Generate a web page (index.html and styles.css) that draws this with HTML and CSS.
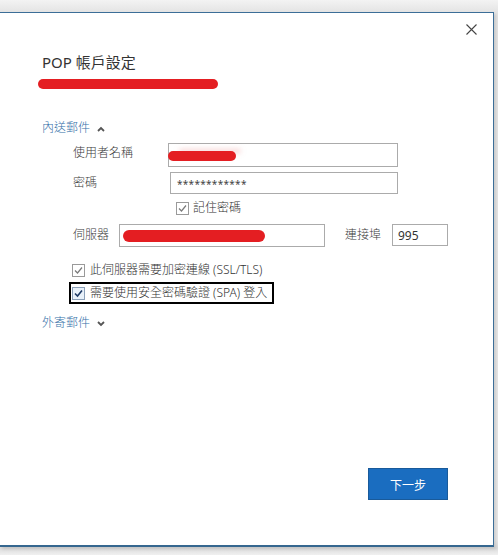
FILE: index.html
```html
<!DOCTYPE html>
<html lang="zh-Hant">
<head>
<meta charset="utf-8">
<title>POP 帳戶設定</title>
<link rel="stylesheet" href="styles.css">
</head>
<body>
<div class="window">
  <button class="close" aria-label="關閉">
    <svg width="11" height="11" viewBox="0 0 11 11"><path d="M0.5 0.5 L10.5 10.5 M10.5 0.5 L0.5 10.5" stroke="#444" stroke-width="1.1" fill="none"/></svg>
  </button>
  <h1 class="title">POP 帳戶設定</h1>
  <div class="redact redact-title"></div>

  <div class="group-head head-in">內送郵件
    <svg class="chev" width="8" height="6" viewBox="0 0 8 6"><path d="M1 5 L4 2 L7 5" stroke="#555" stroke-width="1.8" fill="none"/></svg>
  </div>

  <div class="fields">
    <div class="row row-user">
      <span class="lbl lbl-user">使用者名稱</span>
      <div class="input in-user"><span class="redact redact-user"></span></div>
    </div>
    <div class="row row-pwd">
      <span class="lbl lbl-pwd">密碼</span>
      <div class="input in-pwd"><span class="stars">************</span></div>
    </div>
    <div class="row row-remember">
      <span class="cb"><svg width="11" height="11" viewBox="0 0 11 11"><path d="M2 5.5 L4.5 8 L9 2.5" stroke="#7a7a7a" stroke-width="1.2" fill="none"/></svg></span>
      <span class="cb-text">記住密碼</span>
    </div>
    <div class="row row-server">
      <span class="lbl lbl-server">伺服器</span>
      <div class="input in-server"><span class="redact redact-server"></span></div>
      <span class="lbl lbl-port">連接埠</span>
      <div class="input in-port"><span class="val">995</span></div>
    </div>
    <div class="row row-ssl">
      <span class="cb"><svg width="11" height="11" viewBox="0 0 11 11"><path d="M2 5.5 L4.5 8 L9 2.5" stroke="#7a7a7a" stroke-width="1.2" fill="none"/></svg></span>
      <span class="cb-text">此伺服器需要加密連線 (SSL/TLS)</span>
    </div>
    <div class="row row-spa">
      <span class="cb cb-focus"><svg width="11" height="11" viewBox="0 0 11 11"><path d="M2 5.5 L4.5 8 L9 2.5" stroke="#1d3a66" stroke-width="1.6" fill="none"/></svg></span>
      <span class="cb-text">需要使用安全密碼驗證 (SPA) 登入</span>
    </div>
  </div>

  <div class="group-head head-out">外寄郵件
    <svg class="chev" width="8" height="6" viewBox="0 0 8 6"><path d="M1 1 L4 4 L7 1" stroke="#555" stroke-width="1.8" fill="none"/></svg>
  </div>

  <div class="footer">
    <button class="primary">下一步</button>
  </div>
</div>
</body>
</html>
```

FILE: styles.css
```css
html, body {
  margin: 0;
  padding: 0;
}
body {
  width: 498px;
  height: 555px;
  overflow: hidden;
  padding-top: 12px;
  box-sizing: border-box;
  background: linear-gradient(to bottom, #f3f3f3 0px, #e4e4e4 12px, #e9e9e9 540px, #dcdcdc 548px, #f0f0f0 555px);
  font-family: "Noto Sans", "Noto Sans CJK TC", sans-serif;
  font-weight: 300;
  color: #444;
}
.window {
  position: relative;
  width: 494px;
  height: 535px;
  box-sizing: border-box;
  background: #fff;
  border-top: 1px solid #3c6e98;
  border-right: 1px solid #3c6e98;
  border-bottom: 2px solid #35678f;
  box-shadow: 2px 2px 3px rgba(0,0,0,0.12);
  display: flex;
  flex-direction: column;
}
.close {
  position: absolute;
  top: 11px;
  left: 466px;
  width: 11px;
  height: 11px;
  padding: 0;
  border: 0;
  background: transparent;
  display: block;
}
.close svg { display: block; }
.title {
  margin: 39px 0 0 42px;
  font-size: 15px;
  line-height: 20px;
  font-weight: 400;
  color: #333;
}
.redact {
  display: block;
  background: #e41e22;
  border-radius: 6px;
}
.redact-title {
  margin: 7px 0 0 38px;
  width: 180px;
  height: 10px;
}
.group-head {
  margin-left: 42px;
  font-size: 12px;
  line-height: 16px;
  color: #3470a8;
  display: flex;
  align-items: center;
}
.group-head .chev {
  margin-left: 7px;
  margin-top: 1px;
}
.head-in { margin-top: 31px; }
.head-out { margin-top: 11px; }
.fields {
  margin-left: 73px;
  font-size: 12px;
  line-height: 16px;
}
.row {
  display: flex;
  align-items: center;
}
.lbl {
  color: #3c3c3c;
  flex: none;
}
.input {
  box-sizing: border-box;
  border: 1px solid #ababab;
  background: #fff;
  display: flex;
  align-items: center;
  flex: none;
}
.row-user {
  margin-top: 7px;
  align-items: flex-start;
}
.lbl-user { width: 95px; padding-top: 2px; }
.in-user { width: 230px; height: 24px; }
.redact-user {
  width: 68px;
  height: 10px;
  margin-left: -1px;
  margin-top: 2px;
  border-radius: 5px;
  box-shadow: 8px -5px 5px -3px rgba(240, 170, 170, 0.5);
}
.row-pwd { margin-top: 5px; }
.lbl-pwd { width: 97px; }
.in-pwd { width: 228px; height: 22px; }
.stars {
  margin-left: 6px;
  font-size: 10px;
  font-weight: 400;
  color: #444;
  letter-spacing: 0.3px;
  margin-top: 2px;
}
.row-remember {
  margin-top: 6px;
  margin-left: 103px;
  height: 16px;
}
.cb {
  width: 13px;
  height: 13px;
  box-sizing: border-box;
  border: 1px solid #9a9a9a;
  background: #fff;
  display: flex;
  align-items: center;
  justify-content: center;
  flex: none;
}
.cb svg { display: block; }
.cb-text {
  margin-left: 5px;
  color: #333;
}
.row-remember .cb-text { margin-left: 4px; }
.row-server {
  margin-top: 8px;
  align-items: flex-start;
}
.lbl-server { width: 46px; padding-top: 3px; }
.in-server { width: 206px; height: 23px; }
.redact-server {
  width: 142px;
  height: 12px;
  margin-left: 3px;
  border-radius: 6px;
}
.lbl-port { margin-left: 20px; width: 47px; padding-top: 3px; }
.in-port { width: 56px; height: 22px; }
.val { margin-left: 5px; color: #333; font-size: 12px; font-weight: 400; margin-top: 2px; }
.row-ssl {
  margin-top: 15px;
  margin-left: -1px;
  height: 16px;
}
.row-spa {
  margin-top: 4px;
  margin-left: -4px;
  width: 205px;
  height: 22px;
  box-sizing: border-box;
  border: 2px solid #000;
  padding-left: 1px;
}
.cb-focus {
  background: #e8f1fa;
  border-color: #8a9fb8;
}
.footer {
  margin-top: auto;
  display: flex;
  justify-content: flex-end;
  padding: 0 45px 45px 0;
}
.primary {
  width: 80px;
  height: 32px;
  box-sizing: border-box;
  background: #1a6dc0;
  border: 1px solid #195a9a;
  color: #fff;
  font-family: "Noto Sans CJK TC", sans-serif;
  font-weight: 400;
  font-size: 12px;
  padding: 0;
}
```
